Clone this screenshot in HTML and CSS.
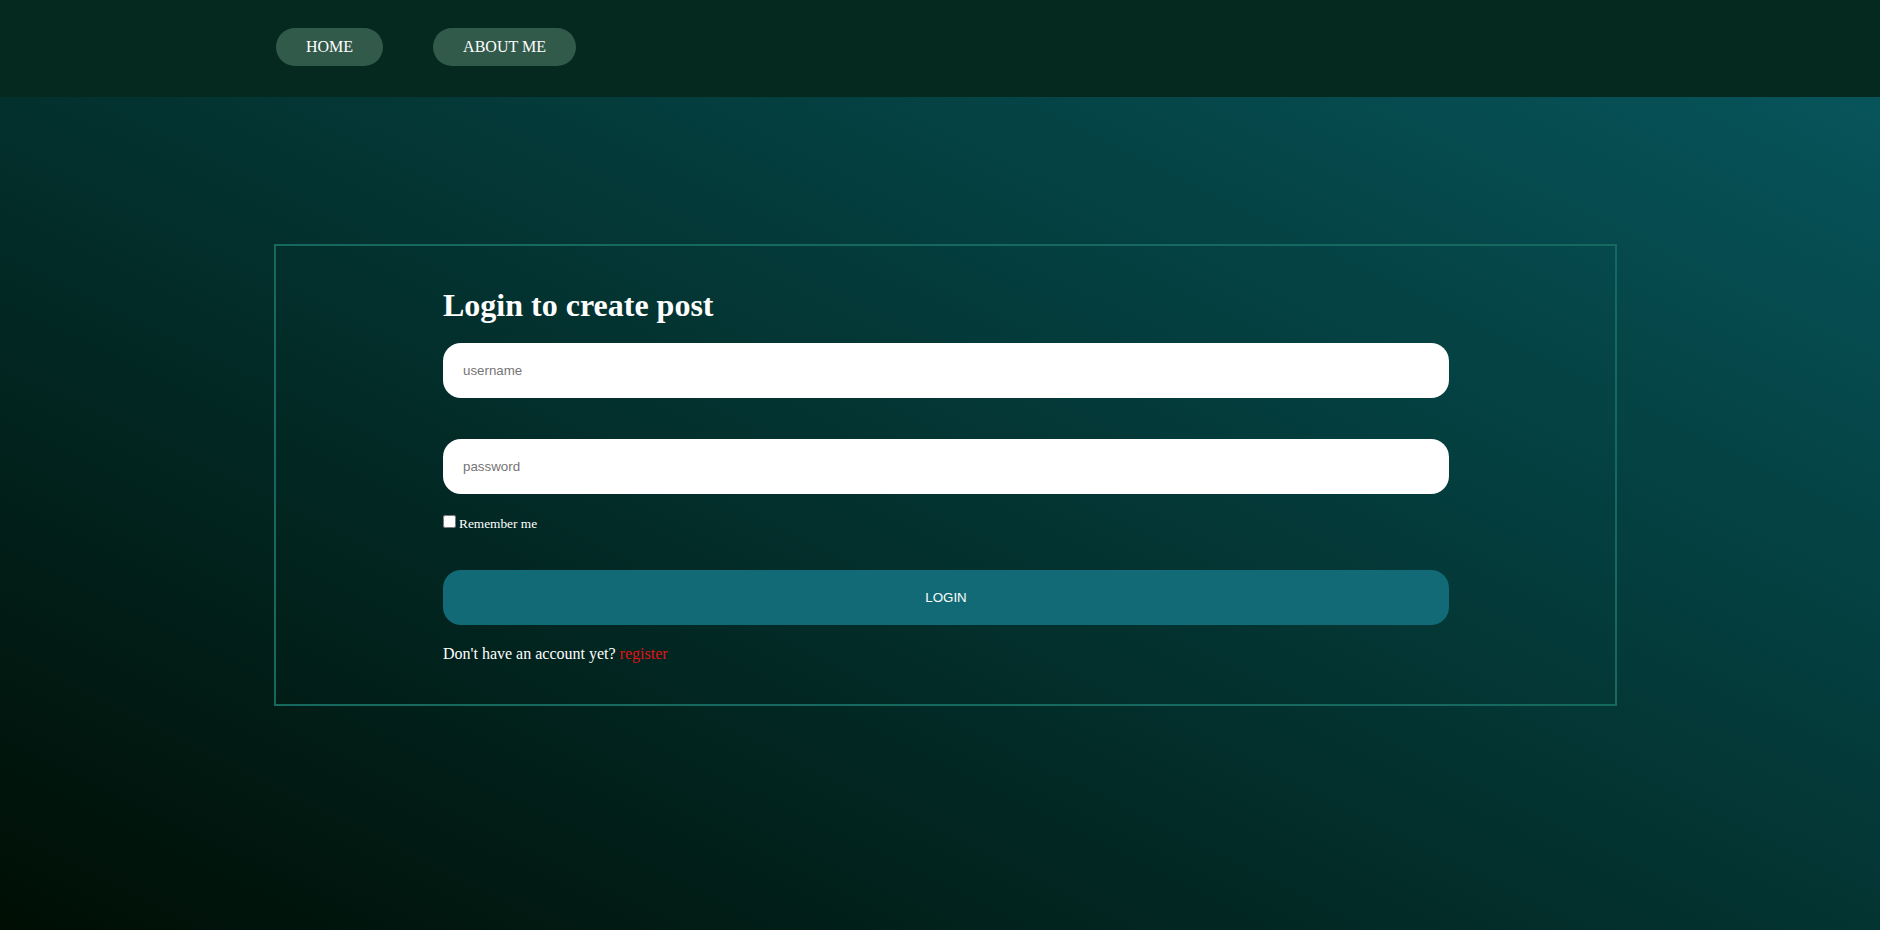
FILE: index.html
```html
<!DOCTYPE html>
<html lang="en">
<head>
<meta charset="utf-8">
<title>Login</title>
<link rel="stylesheet" href="styles.css">
</head>
<body>
  <header class="topbar">
    <nav class="nav">
      <a class="nav-link" href="#">HOME</a>
      <a class="nav-link" href="#">ABOUT ME</a>
    </nav>
  </header>
  <main class="main">
    <section class="card">
      <h1 class="title">Login to create post</h1>
      <form class="form">
        <input class="field field-user" type="text" placeholder="username">
        <input class="field" type="password" placeholder="password">
        <label class="remember"><input class="check" type="checkbox"><span>Remember me</span></label>
        <button class="submit" type="button">LOGIN</button>
      </form>
      <p class="signup">Don't have an account yet? <a class="register" href="#">register</a></p>
    </section>
  </main>
</body>
</html>
```

FILE: styles.css
```css
* { box-sizing: border-box; }

html, body { margin: 0; padding: 0; }

body {
  min-height: 100vh;
  font-family: "Liberation Serif", "Times New Roman", serif;
  color: #ffffff;
  background: linear-gradient(to top right, #000e04 0%, #033432 50%, #07585f 100%);
}

.topbar {
  background: #05291f;
  height: 97px;
  padding: 28px 0 0 276px;
}

.nav {
  display: flex;
  gap: 50px;
}

.nav-link {
  display: block;
  background: #325a4b;
  color: #ffffff;
  text-decoration: none;
  font-size: 16px;
  line-height: 18px;
  padding: 10px 30px;
  border-radius: 20px;
}

.main {
  padding: 147px 0 0 274px;
}

.card {
  width: 1343px;
  border: 2px solid #16695f;
  padding: 41px 166px 41px 167px;
}

.title {
  margin: 0 0 19px;
  font-size: 32px;
  line-height: 37px;
  font-weight: bold;
}

.form {
  display: flex;
  flex-direction: column;
}

.field {
  display: block;
  width: 100%;
  height: 55px;
  border: none;
  border-radius: 18px;
  background: #ffffff;
  padding: 0 20px;
  font-family: "Liberation Sans", Arial, sans-serif;
  font-size: 13.33px;
  color: #222;
  outline: none;
}

.field::placeholder { color: #757575; }

.field-user { margin-bottom: 41px; }

.remember {
  display: flex;
  align-items: baseline;
  margin-top: 21px;
  font-size: 13.33px;
  line-height: 15px;
}

.check {
  width: 13px;
  height: 13px;
  margin: 0 3px 0 0;
}

.submit {
  margin-top: 39px;
  height: 55px;
  width: 100%;
  border: none;
  border-radius: 18px;
  background: #116a75;
  color: #ffffff;
  font-family: "Liberation Sans", Arial, sans-serif;
  font-size: 13.33px;
}

.signup {
  margin: 20px 0 0;
  font-size: 16px;
  line-height: 18px;
}

.register {
  color: #e01212;
  text-decoration: none;
}
```
